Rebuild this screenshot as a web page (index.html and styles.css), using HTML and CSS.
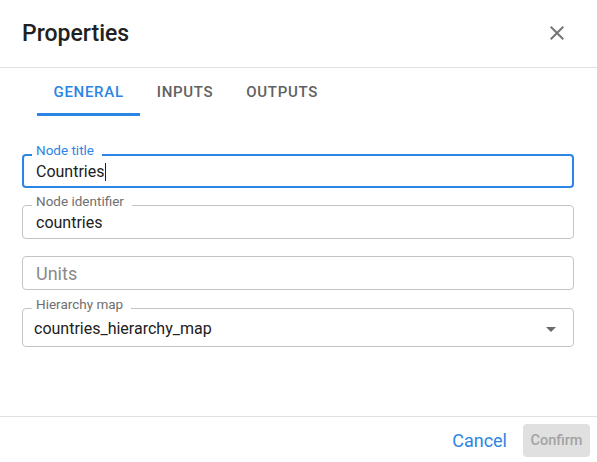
FILE: index.html
```html
<!DOCTYPE html>
<html>
<head>
<meta charset="utf-8">
<link rel="stylesheet" href="styles.css">
</head>
<body>
<div class="dialog">
  <div class="header">
    <div class="title">Properties</div>
    <div class="close">
      <svg width="24" height="24" viewBox="0 0 24 24"><path d="M19 6.41 17.59 5 12 10.59 6.41 5 5 6.41 10.59 12 5 17.59 6.41 19 12 13.41 17.59 19 19 17.59 13.41 12z" fill="#757575"/></svg>
    </div>
  </div>
  <div class="tabs">
    <div class="tab active">GENERAL</div>
    <div class="tab">INPUTS</div>
    <div class="tab">OUTPUTS</div>
  </div>
  <div class="form">
    <div class="field focused">
      <span class="label">Node title</span>
      <div class="value">Countries<span class="caret"></span></div>
    </div>
    <div class="field">
      <span class="label">Node identifier</span>
      <div class="value">countries</div>
    </div>
    <div class="field">
      <div class="value placeholder">Units</div>
    </div>
    <div class="field select">
      <span class="label">Hierarchy map</span>
      <div class="value">countries_hierarchy_map</div>
      <svg class="arrow" width="24" height="24" viewBox="0 0 24 24"><path d="M7 10l5 5 5-5z" fill="#6b6b6b"/></svg>
    </div>
  </div>
  <div class="footer">
    <div class="btn-text">Cancel</div>
    <div class="btn-disabled">Confirm</div>
  </div>
</div>
</body>
</html>
```
FILE: styles.css
```css
* { box-sizing: border-box; }
html, body { margin: 0; padding: 0; background: #fff; }
body { font-family: Roboto, "Noto Sans", sans-serif; color: #212121; }
.dialog { width: 597px; height: 462px; display: flex; flex-direction: column; }
.header { height: 68px; border-bottom: 1px solid #e0e0e0; display: flex; align-items: center; justify-content: space-between; padding: 0 28px 1px 22px; }
.title { font-size: 23px; font-weight: 500; color: #212121; letter-spacing: 0; }
.close { width: 24px; height: 24px; }
.close svg { display: block; }
.tabs { height: 48px; display: flex; padding-left: 37px; }
.tab { height: 48px; padding: 0 16.5px; display: flex; align-items: center; font-size: 15px; font-weight: 500; letter-spacing: 0.7px; color: #616161; border-bottom: 3px solid transparent; padding-top: 3px; }
.tab.active { color: #2d85e3; border-bottom-color: #2d85e3; }
.form { flex: 1; padding: 38px 23px 0 22px; display: flex; flex-direction: column; gap: 17px; }
.field { position: relative; height: 34px; border: 1px solid #c4c4c4; border-radius: 4px; display: flex; align-items: center; padding-left: 13px; padding-top: 2px; }
.field.focused { border: 2px solid #2d85e3; padding-left: 12px; }
.field.select { height: 39px; padding-left: 11px; padding-right: 10px; justify-content: space-between; margin-top: 1px; }
.label { position: absolute; top: -12px; left: 9px; padding: 0 8px 0 4px; background: #fff; font-size: 13.5px; line-height: 14px; color: #6f6f6f; }
.field.focused .label { top: -13px; left: 8px; color: #2d85e3; }
.value { font-size: 16px; line-height: 20px; color: #212121; display: flex; align-items: center; }
.value.placeholder { color: #8a8a8a; font-size: 18px; }
.caret { display: inline-block; width: 1px; height: 18px; background: #212121; margin-left: 1px; }
.arrow { display: block; }
.footer { height: 46px; border-top: 1px solid #e0e0e0; display: flex; align-items: center; justify-content: flex-end; padding: 1px 7px 0 0; gap: 8px; }
.btn-text { font-size: 18px; color: #2d85e3; padding: 6px 8px; }
.btn-disabled { width: 67px; height: 33px; border-radius: 4px; background: #e0e0e0; color: #a3a3a3; font-size: 14.5px; font-weight: 500; display: flex; align-items: center; justify-content: center; }
```
